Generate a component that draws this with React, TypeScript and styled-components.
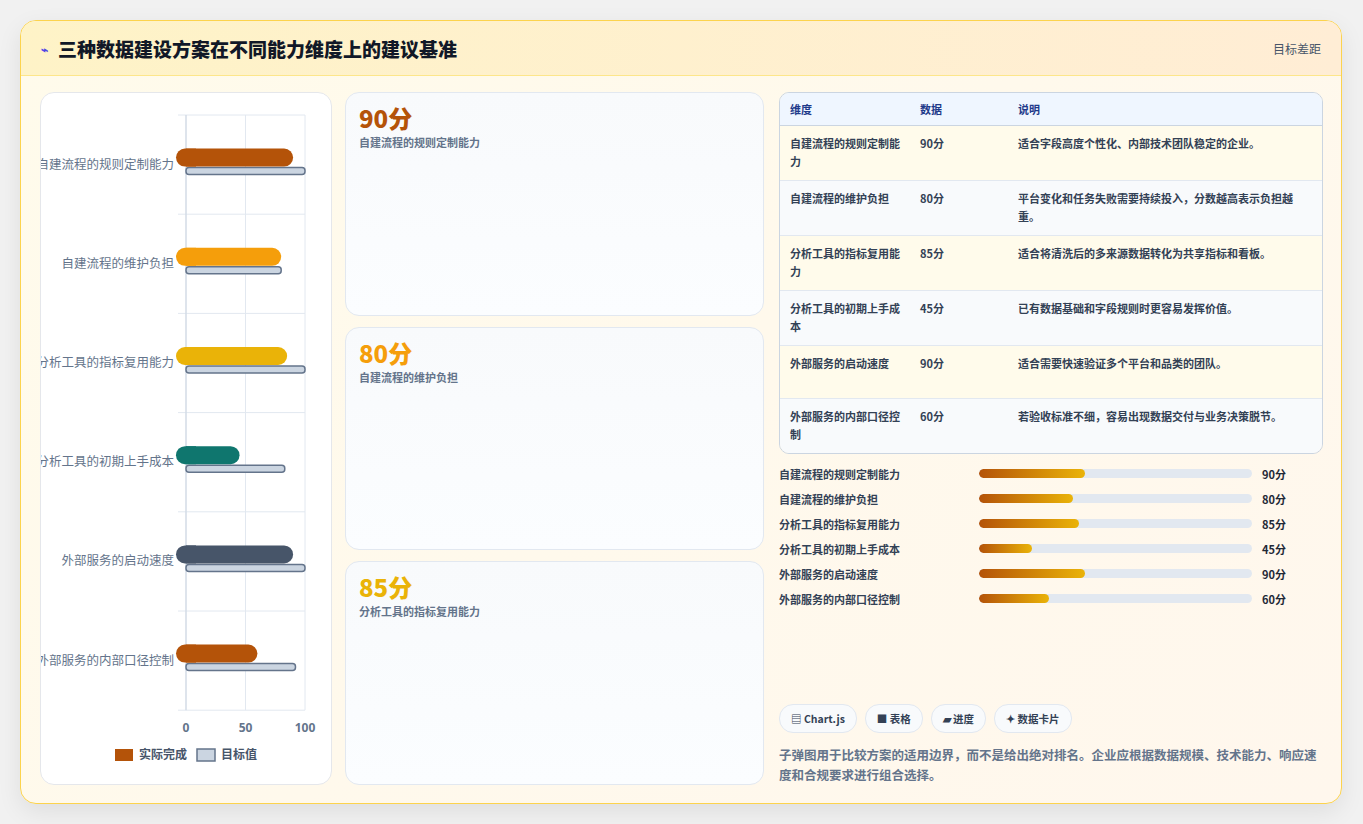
import styled, { createGlobalStyle } from 'styled-components'

const GlobalStyle = createGlobalStyle`
    body {
        margin: 0;
        background: #f1f1f1;
        font-family: 'Noto Sans CJK SC', 'Noto Sans', sans-serif;
    }
`

const rows = [
    { name: '自建流程的规则定制能力', value: 90, target: 100, color: '#b45309', note: '适合字段高度个性化、内部技术团队稳定的企业。' },
    { name: '自建流程的维护负担', value: 80, target: 80, color: '#f59e0b', note: '平台变化和任务失败需要持续投入，分数越高表示负担越重。' },
    { name: '分析工具的指标复用能力', value: 85, target: 100, color: '#eab308', note: '适合将清洗后的多来源数据转化为共享指标和看板。' },
    { name: '分析工具的初期上手成本', value: 45, target: 83, color: '#0f766e', note: '已有数据基础和字段规则时更容易发挥价值。' },
    { name: '外部服务的启动速度', value: 90, target: 100, color: '#475569', note: '适合需要快速验证多个平台和品类的团队。' },
    { name: '外部服务的内部口径控制', value: 60, target: 92, color: '#b45309', note: '若验收标准不细，容易出现数据交付与业务决策脱节。' },
]

const cards = [
    { value: 90, color: '#b45309', name: rows[0].name },
    { value: 80, color: '#f59e0b', name: rows[1].name },
    { value: 85, color: '#eab308', name: rows[2].name },
]

// drawn like the canvas chart: labels run off the left edge of the card
const Chart = () => {
    const x0 = 145
    const w = 119
    const top = 22
    const band = 99.2
    return (
        <svg width='290' height='691' style={{ display: 'block' }}>
            {[0, 50, 100].map((t) => (
                <line key={t} x1={x0 + (w * t) / 100} x2={x0 + (w * t) / 100} y1={top} y2={top + band * 6} stroke='#e2e8f0' />
            ))}
            {Array.from({ length: 7 }).map((_, i) => (
                <line key={i} x1={x0 - 8} x2={x0 + w} y1={top + band * i} y2={top + band * i} stroke='#e2e8f0' />
            ))}
            <line x1={x0} x2={x0} y1={top} y2={top + band * 6} stroke='#cbd5e1' />
            {rows.map((r, i) => {
                const cy = top + band * i + band / 2
                return (
                    <g key={r.name}>
                        <text x={x0 - 12} y={cy + 4} textAnchor='end' fontSize='12.5' fill='#64748b' fontFamily='Noto Sans CJK SC, sans-serif'>
                            {r.name}
                        </text>
                        <rect x={x0} y={cy + 3} width={(w * r.target) / 100} height='7' rx='3' fill='#cbd5e1' stroke='#64748b' strokeWidth='1.5' />
                        <rect x={x0 - 10} y={cy - 16} width={10 + (w * r.value) / 100} height='18' rx='9' fill={r.color} />
                        <rect x={x0} y={cy - 16} width='10' height='18' fill={r.color} />
                    </g>
                )
            })}
            {[0, 50, 100].map((t) => (
                <text key={t} x={x0 + (w * t) / 100} y={top + band * 6 + 22} textAnchor='middle' fontSize='12' fontWeight='700' fill='#64748b' fontFamily='Noto Sans, sans-serif'>
                    {t}
                </text>
            ))}
            <rect x='74' y='656' width='18' height='12' fill='#b45309' />
            <text x='98' y='666' fontSize='12' fontWeight='700' fill='#475569' fontFamily='Noto Sans CJK SC, sans-serif'>实际完成</text>
            <rect x='156' y='656' width='18' height='12' fill='#cbd5e1' stroke='#64748b' strokeWidth='1.5' />
            <text x='180' y='666' fontSize='12' fontWeight='700' fill='#475569' fontFamily='Noto Sans CJK SC, sans-serif'>目标值</text>
        </svg>
    )
}

const App = () => (
    <>
        <GlobalStyle />
        <Page>
            <Panel>
                <Header>
                    <Title>
                        <Bolt>⌁</Bolt>三种数据建设方案在不同能力维度上的建议基准
                    </Title>
                    <HeaderLink>目标差距</HeaderLink>
                </Header>
                <Body>
                    <ChartCard>
                        <Chart />
                    </ChartCard>
                    <CardColumn>
                        {cards.map((c) => (
                            <StatCard key={c.name}>
                                <StatValue $color={c.color}>{c.value}分</StatValue>
                                <StatLabel>{c.name}</StatLabel>
                            </StatCard>
                        ))}
                    </CardColumn>
                    <RightColumn>
                        <Table>
                            <colgroup>
                                <col style={{ width: 130 }} />
                                <col style={{ width: 98 }} />
                                <col />
                            </colgroup>
                            <thead>
                                <tr>
                                    <Th>维度</Th>
                                    <Th>数据</Th>
                                    <Th>说明</Th>
                                </tr>
                            </thead>
                            <tbody>
                                {rows.map((r, i) => (
                                    <Tr key={r.name} $alt={i % 2 === 1}>
                                        <Td>{r.name}</Td>
                                        <Td>{r.value}分</Td>
                                        <Td>{r.note}</Td>
                                    </Tr>
                                ))}
                            </tbody>
                        </Table>
                        <Progress>
                            {rows.map((r) => (
                                <ProgressRow key={r.name}>
                                    <ProgressLabel>{r.name}</ProgressLabel>
                                    <Track>
                                        <Fill style={{ width: `${r.value * 0.43}%` }} />
                                    </Track>
                                    <ProgressValue>{r.value}分</ProgressValue>
                                </ProgressRow>
                            ))}
                        </Progress>
                        <Spacer />
                        <Tags>
                            <Tag>▤ Chart.js</Tag>
                            <Tag>■ 表格</Tag>
                            <Tag>▰ 进度</Tag>
                            <Tag>✦ 数据卡片</Tag>
                        </Tags>
                        <Note>子弹图用于比较方案的适用边界，而不是给出绝对排名。企业应根据数据规模、技术能力、响应速度和合规要求进行组合选择。</Note>
                    </RightColumn>
                </Body>
            </Panel>
        </Page>
    </>
)

export default App

const Page = styled.div`
    padding: 20px;
    height: 824px;
    box-sizing: border-box;
`

const Panel = styled.div`
    width: 1322px;
    height: 784px;
    box-sizing: border-box;
    border: 1px solid #fcd34d;
    border-radius: 16px;
    background: linear-gradient(135deg, #fffbeb, #fff7ed);
    box-shadow: 0 8px 24px rgba(0, 0, 0, 0.08);
    display: flex;
    flex-direction: column;
    overflow: hidden;
`

const Header = styled.div`
    height: 54px;
    flex-shrink: 0;
    background: linear-gradient(90deg, #fef3c7, #ffedd5);
    border-bottom: 1px solid #fde68a;
    display: flex;
    align-items: center;
    justify-content: space-between;
    padding: 0 20px;
`

const Title = styled.div`
    font-size: 19px;
    font-weight: 800;
    color: #111827;
    display: flex;
    align-items: center;
`

const Bolt = styled.span`
    color: #4f46e5;
    font-size: 12px;
    margin-right: 10px;
`

const HeaderLink = styled.span`
    font-size: 12px;
    color: #475569;
`

const Body = styled.div`
    flex: 1;
    display: flex;
    gap: 13px;
    padding: 16px 18px 18px 19px;
    min-height: 0;
`

const ChartCard = styled.div`
    width: 290px;
    background: #fff;
    border: 1px solid #e5e7eb;
    border-radius: 14px;
    overflow: hidden;
`

const CardColumn = styled.div`
    width: 419px;
    display: flex;
    flex-direction: column;
    gap: 11px;
`

const StatCard = styled.div`
    flex: 1;
    background: linear-gradient(180deg, #f8fafc, #fbfdff);
    border: 1px solid #e2e8f0;
    border-radius: 14px;
    padding: 9px 13px;
`

const StatValue = styled.div<{ $color: string }>`
    font-size: 24px;
    font-weight: 800;
    color: ${(p) => p.$color};
    line-height: 32px;
`

const StatLabel = styled.div`
    font-size: 11px;
    font-weight: 700;
    color: #64748b;
`

const RightColumn = styled.div`
    flex: 1;
    margin-left: 2px;
    display: flex;
    flex-direction: column;
`

const Table = styled.table`
    width: 100%;
    table-layout: fixed;
    border-collapse: separate;
    border-spacing: 0;
    border: 1px solid #cbd5e1;
    border-radius: 10px;
    overflow: hidden;
    font-size: 11px;
    font-weight: 700;
    color: #334155;
`

const Th = styled.th`
    background: #eff6ff;
    color: #1e3a8a;
    text-align: left;
    height: 32px;
    padding: 0 10px;
    border-bottom: 1px solid #cbd5e1;
`

const Tr = styled.tr<{ $alt: boolean }>`
    background: ${(p) => (p.$alt ? '#f8fafc' : '#fffbeb')};
    td {
        border-top: 1px solid #e2e8f0;
    }
    &:nth-child(1) td {
        border-top: none;
    }
`

const Td = styled.td`
    padding: 8px 10px 10px;
    height: 34px;
    line-height: 18px;
    vertical-align: top;
`

const Progress = styled.div`
    margin-top: 10px;
    display: flex;
    flex-direction: column;
    gap: 6px;
`

const ProgressRow = styled.div`
    display: flex;
    align-items: center;
    height: 19px;
`

const ProgressLabel = styled.div`
    width: 200px;
    font-size: 11px;
    font-weight: 700;
    color: #334155;
`

const Track = styled.div`
    width: 273px;
    height: 9px;
    border-radius: 5px;
    background: #e2e8f0;
    overflow: hidden;
`

const Fill = styled.div`
    height: 100%;
    border-radius: 5px;
    background: linear-gradient(90deg, #b45309, #eab308);
`

const ProgressValue = styled.div`
    margin-left: 10px;
    font-size: 11px;
    font-weight: 700;
    color: #1f2937;
`

const Spacer = styled.div`
    flex: 1;
`

const Tags = styled.div`
    display: flex;
    gap: 8px;
`

const Tag = styled.span`
    font-size: 10.5px;
    font-weight: 700;
    color: #334155;
    background: #f8fafc;
    border: 1px solid #e2e8f0;
    border-radius: 14px;
    padding: 6px 11px;
`

const Note = styled.p`
    margin: 12px 0 0;
    font-size: 12.5px;
    font-weight: 700;
    line-height: 20px;
    color: #64748b;
`
